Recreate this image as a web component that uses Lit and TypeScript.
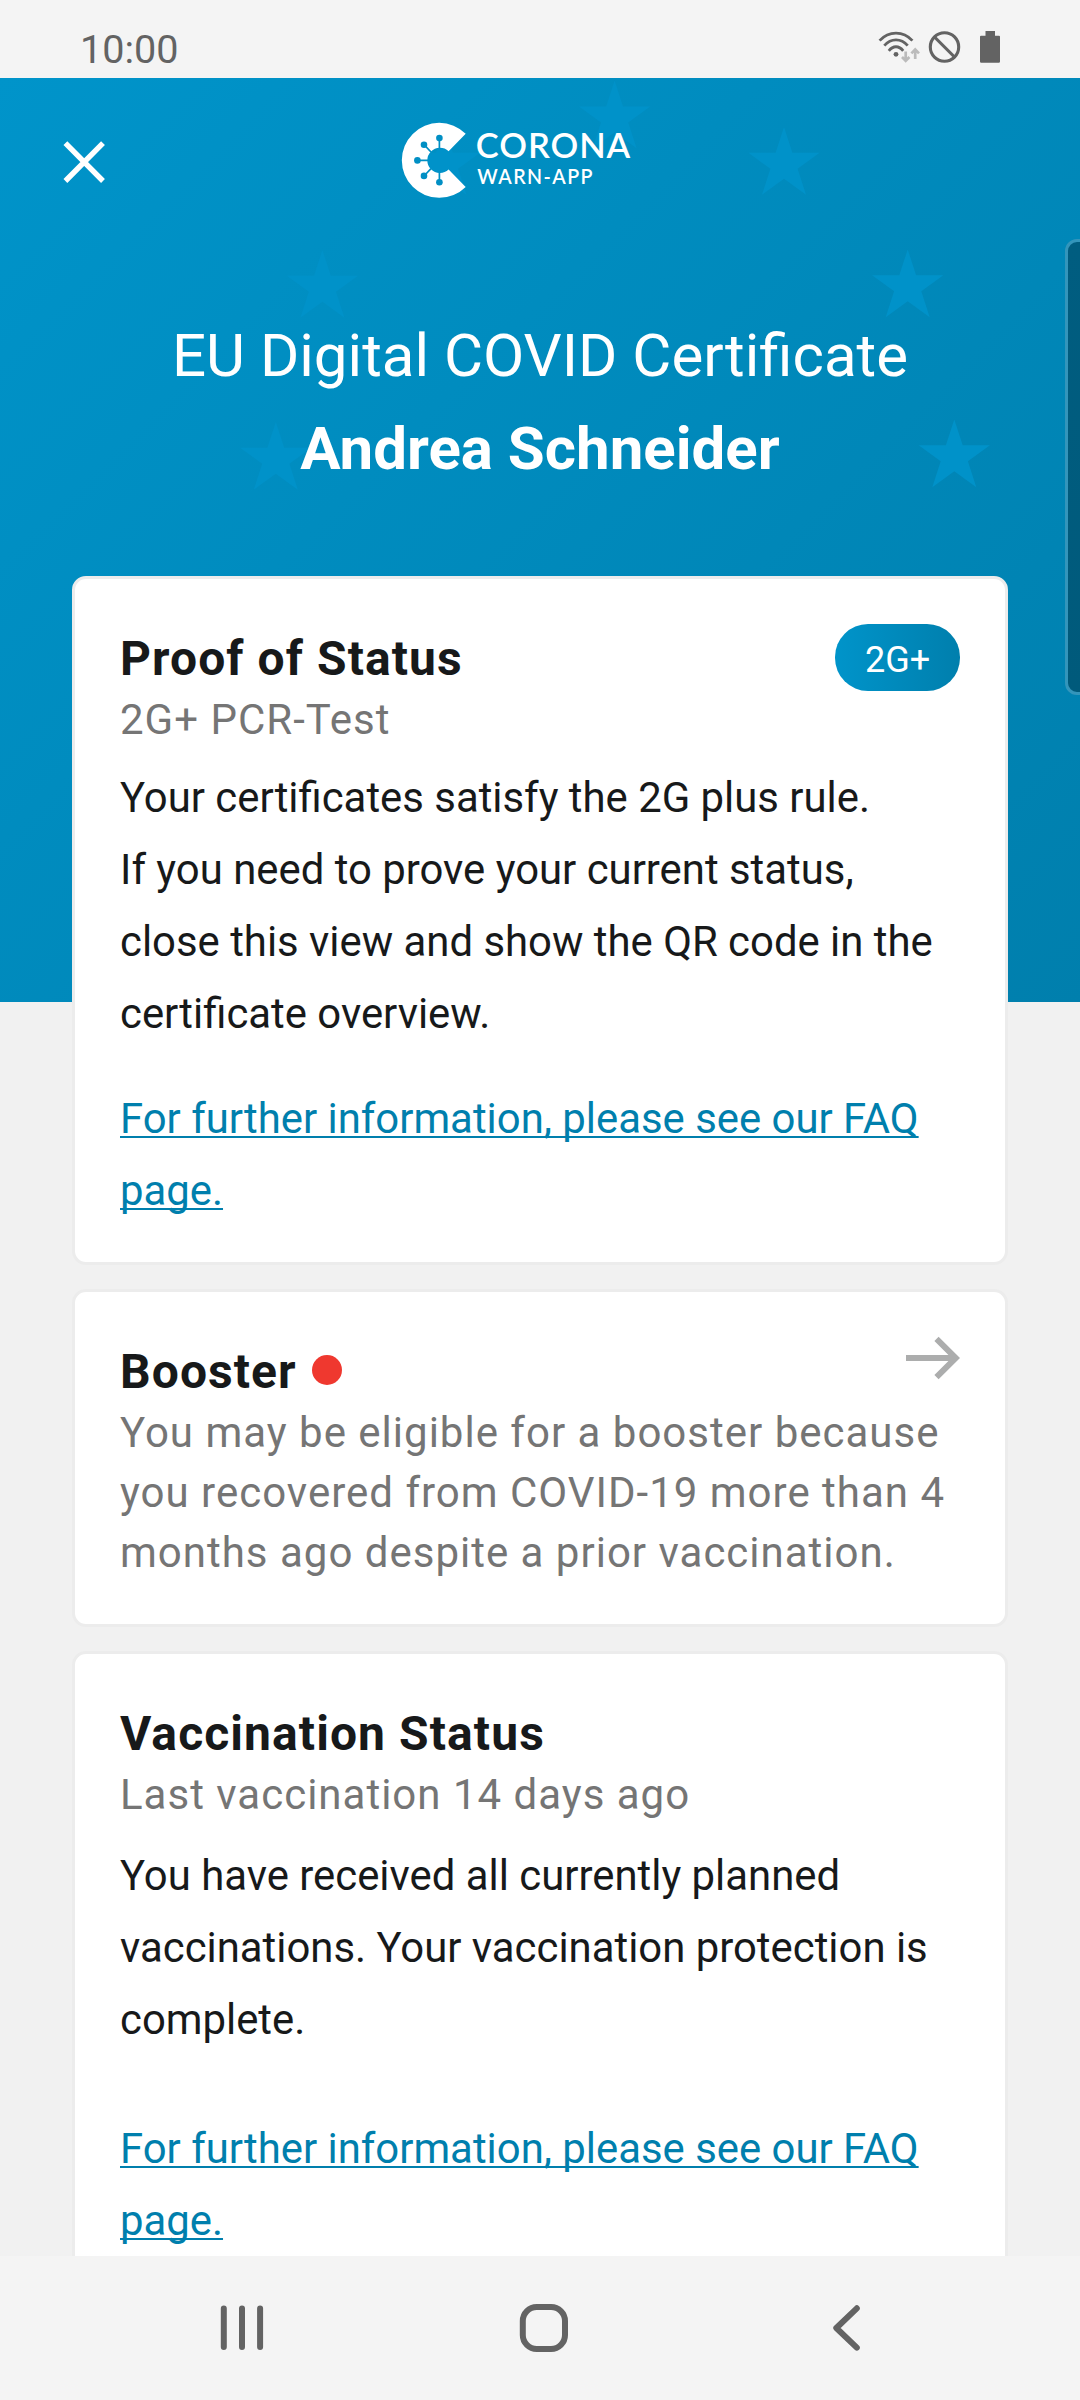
import { LitElement, html, css, nothing } from "lit";
import { customElement, property } from "lit/decorators.js";

/** Top tips of the background stars, in header coordinates. */
const STARS: [number, number][] = [
  [614.6, 2.6],
  [784, 49],
  [907.7, 171.5],
  [954.3, 341.5],
  [444.5, 49],
  [322.4, 172],
  [275.8, 344],
];

/** Star outline whose top tip is at the given point. */
function starPath([x, y]: [number, number]): string {
  return `M${x} ${y}l8.4 25.8h27.2l-22 16l8.4 25.9l-22 -16l-22 16l8.4 -25.9l-22 -16h27.2z`;
}

@customElement("status-bar")
class StatusBar extends LitElement {
  static styles = css`
    :host {
      display: flex;
      flex: none;
      box-sizing: border-box;
      height: 78px;
      padding: 26px 80px 0;
      justify-content: space-between;
      background: #f4f4f4;
      color: #636363;
      font-size: 39.6px;
      line-height: 48px;
    }
    .icons {
      display: block;
      width: 124px;
      height: 36px;
      margin-top: 2px;
    }
  `;

  render() {
    return html`
      <span>10:00</span>
      <svg class="icons" viewBox="876 28 124 36" fill="none">
        <g stroke="#636363" stroke-width="2.8">
          <path d="M879.6 40.6C888.8 30.6 903.2 30.6 912.4 40.6" />
          <path d="M884.3 45.6C891 38 901 38 907.7 45.6" />
          <path d="M888.8 50.8C893 45.4 899 45.4 903.2 50.8" />
        </g>
        <circle cx="896" cy="54.3" r="2.4" fill="#636363" />
        <path
          d="M905.7 51.5V60.5M902 57L905.7 60.8L909.4 57M915.2 59V50M911.4 53.4L915.2 49.4L919 53.4"
          stroke="#bbbbbb"
          stroke-width="2.7"
        />
        <circle cx="944.5" cy="47" r="14.2" stroke="#636363" stroke-width="3.1" />
        <path d="M934.5 37L954.5 57" stroke="#636363" stroke-width="3.1" />
        <path
          d="M985.5 31H995V35.7H999Q1000 35.7 1000 36.7V61.5Q1000 62.7 998.8 62.7H981.2Q980 62.7 980 61.5V36.7Q980 35.7 981 35.7H985.5Z"
          fill="#636363"
        />
      </svg>
    `;
  }
}

@customElement("certificate-header")
class CertificateHeader extends LitElement {
  static styles = css`
    :host {
      display: block;
      flex: none;
      position: relative;
      height: 924px;
      background: linear-gradient(135deg, #0094ca 0%, #007fad 100%);
      color: #fff;
    }
    .stars {
      position: absolute;
      inset: 0;
      width: 1080px;
      height: 924px;
    }
    .bar {
      position: relative;
      display: grid;
      grid-template-columns: 1fr auto 1fr;
      align-items: center;
      height: 164px;
      padding: 0 60px;
    }
    .close {
      display: block;
      width: 48px;
      height: 48px;
    }
    .logo {
      display: block;
      width: 276px;
      height: 80px;
      margin-right: 24px;
    }
    .titles {
      position: relative;
      padding-top: 67px;
      text-align: center;
      font-size: 60px;
      line-height: 93px;
    }
    .title,
    .name {
      margin: 0;
      font: inherit;
    }
    .name {
      font-weight: 700;
    }
  `;

  render() {
    return html`
      <svg class="stars" viewBox="0 0 1080 924" fill="#0092c9">
        <path d=${STARS.map(starPath).join("")} />
      </svg>
      <div class="bar">
        <svg class="close" viewBox="60 136 48 48">
          <path d="M65.4 143.2L103 181M103 143.2L65.4 181" stroke="#fff" stroke-width="5.4" />
        </svg>
        <svg class="logo" viewBox="390 120.3 276 80">
          <path
            d="M465.7 134A37.5 37.5 0 1 0 465.7 187.3L448.6 169.9A12.6 12.6 0 1 1 448.6 151.6Z"
            fill="#fff"
          />
          <path
            d="M439.4 149V138.2M431 152.3L424 145M428 160.7H417.4M431 169L424 176.3M439.4 172V183"
            stroke="#008fc4"
            stroke-width="1.7"
          />
          <g fill="#008fc4">
            <circle cx="439.4" cy="138.4" r="3.3" />
            <circle cx="424" cy="145" r="3.3" />
            <circle cx="417.4" cy="160.7" r="3.3" />
            <circle cx="424" cy="176.2" r="3.3" />
            <circle cx="439.4" cy="182.6" r="3.3" />
          </g>
          <g font-family="Lato, sans-serif" fill="#fff">
            <text x="475.8" y="158.6" font-size="34.5" font-weight="600" textLength="154.5">CORONA</text>
            <g transform="translate(477.3 184.6) scale(0.9 1)">
              <text font-size="21.8" font-weight="600" textLength="128">WARN-APP</text>
            </g>
          </g>
        </svg>
      </div>
      <div class="titles">
        <h1 class="title">EU Digital COVID Certificate</h1>
        <h2 class="name">Andrea Schneider</h2>
      </div>
    `;
  }
}

@customElement("status-card")
class StatusCard extends LitElement {
  @property() heading = "";
  @property() subtitle = "";
  @property() badge = "";
  @property({ type: Boolean }) unread = false;
  @property({ type: Boolean }) arrow = false;

  static styles = css`
    :host {
      display: block;
      box-sizing: border-box;
      border: 3px solid #ececec;
      border-radius: 14px;
      padding: 50px 45px 35px;
      background: #fff;
      color: #17191a;
      font-size: 41.87px;
      line-height: 72px;
    }
    :host([arrow]) {
      padding-bottom: 41px;
    }
    .head {
      display: flex;
      align-items: center;
      height: 60px;
    }
    .heading {
      margin: 0;
      font-size: 48px;
      line-height: 60px;
      font-weight: 700;
      letter-spacing: 1.08px;
      white-space: nowrap;
    }
    .dot {
      width: 30px;
      height: 30px;
      margin: -4px 0 0 15px;
      border-radius: 50%;
      background: #ef382f;
    }
    .badge {
      width: 125px;
      height: 67px;
      margin: -3px 0 0 auto;
      border-radius: 33px;
      background: linear-gradient(90deg, #0094ca, #007fad);
      color: #fff;
      font-size: 36px;
      line-height: 72px;
      text-align: center;
    }
    .arrow {
      width: 54px;
      height: 44px;
      margin: -28px 0 0 auto;
    }
    .subtitle {
      margin: 1px 0 0;
      color: #757575;
      font-size: 42px;
      line-height: 60px;
      letter-spacing: 1px;
    }
  `;

  render() {
    return html`
      <div class="head">
        <h3 class="heading">${this.heading}</h3>
        ${this.unread ? html`<span class="dot"></span>` : nothing}
        ${this.badge ? html`<span class="badge">${this.badge}</span>` : nothing}
        ${this.arrow
          ? html`<svg class="arrow" viewBox="0 0 54 44" fill="none" stroke="#acadad" stroke-width="6">
              <path d="M0 22H49M30.5 2.8L49.8 22L30.5 41.2" />
            </svg>`
          : nothing}
      </div>
      <p class="subtitle">${this.subtitle}</p>
      <slot></slot>
    `;
  }
}

@customElement("nav-bar")
class NavBar extends LitElement {
  static styles = css`
    :host {
      display: flex;
      flex: none;
      box-sizing: border-box;
      height: 144px;
      padding: 0 216px;
      align-items: center;
      justify-content: space-between;
      background: #f4f4f4;
    }
    .icon {
      width: 52px;
      height: 52px;
      fill: none;
      stroke: #636363;
      stroke-width: 6;
      stroke-linecap: round;
      stroke-linejoin: round;
    }
    .home {
      margin-left: 8px;
    }
  `;

  render() {
    return html`
      <svg class="icon" viewBox="216 2302 52 52">
        <path d="M223.8 2308.5V2347M242 2308.5V2347M260.1 2308.5V2347" />
      </svg>
      <svg class="icon home" viewBox="518 2302 52 52">
        <rect x="522.8" y="2307" width="42.2" height="42" rx="14" />
      </svg>
      <svg class="icon" viewBox="812 2302 52 52">
        <path d="M856.8 2308.3L836.3 2328L856.8 2347.6" />
      </svg>
    `;
  }
}

@customElement("app-root")
class AppRoot extends LitElement {
  static styles = css`
    :host {
      display: flex;
      flex-direction: column;
      position: relative;
      width: 1080px;
      height: 2400px;
      overflow: hidden;
      background: #f1f1f1;
      font-family: Roboto, sans-serif;
    }
    .content {
      flex: 1;
      min-height: 0;
      overflow: hidden;
    }
    .cards {
      position: relative;
      display: flex;
      flex-direction: column;
      gap: 24px;
      margin-top: -426px;
      padding: 0 72px;
    }
    .body {
      margin: 12px 0 0;
    }
    .body.late {
      margin-top: 15px;
    }
    .link {
      display: block;
      margin-top: 33px;
      color: #007fad;
      text-decoration: underline;
      text-decoration-thickness: 2.4px;
      text-underline-offset: 3px;
      text-decoration-skip-ink: none;
    }
    .link.late {
      margin-top: 57px;
    }
    .handle {
      position: absolute;
      top: 239px;
      right: -12px;
      box-sizing: border-box;
      width: 27px;
      height: 456px;
      border: 3px solid #3395bb;
      border-radius: 12px;
      background: linear-gradient(#005d80, #005a7b);
    }
  `;

  render() {
    return html`
      <status-bar></status-bar>
      <div class="content">
        <certificate-header></certificate-header>
        <div class="cards">
          <status-card heading="Proof of Status" subtitle="2G+ PCR-Test" badge="2G+">
            <p class="body">
              Your certificates satisfy the 2G plus rule.<br />If you need to prove your current
              status, close this view and show the QR code in the certificate overview.
            </p>
            <a class="link">For further information, please see our FAQ page.</a>
          </status-card>
          <status-card
            heading="Booster"
            subtitle="You may be eligible for a booster because you recovered from COVID-19 more than 4 months ago despite a prior vaccination."
            unread
            arrow
          ></status-card>
          <status-card heading="Vaccination Status" subtitle="Last vaccination 14 days ago">
            <p class="body late">
              You have received all currently planned vaccinations. Your vaccination protection is
              complete.
            </p>
            <a class="link late">For further information, please see our FAQ page.</a>
          </status-card>
        </div>
      </div>
      <nav-bar></nav-bar>
      <div class="handle"></div>
    `;
  }
}
